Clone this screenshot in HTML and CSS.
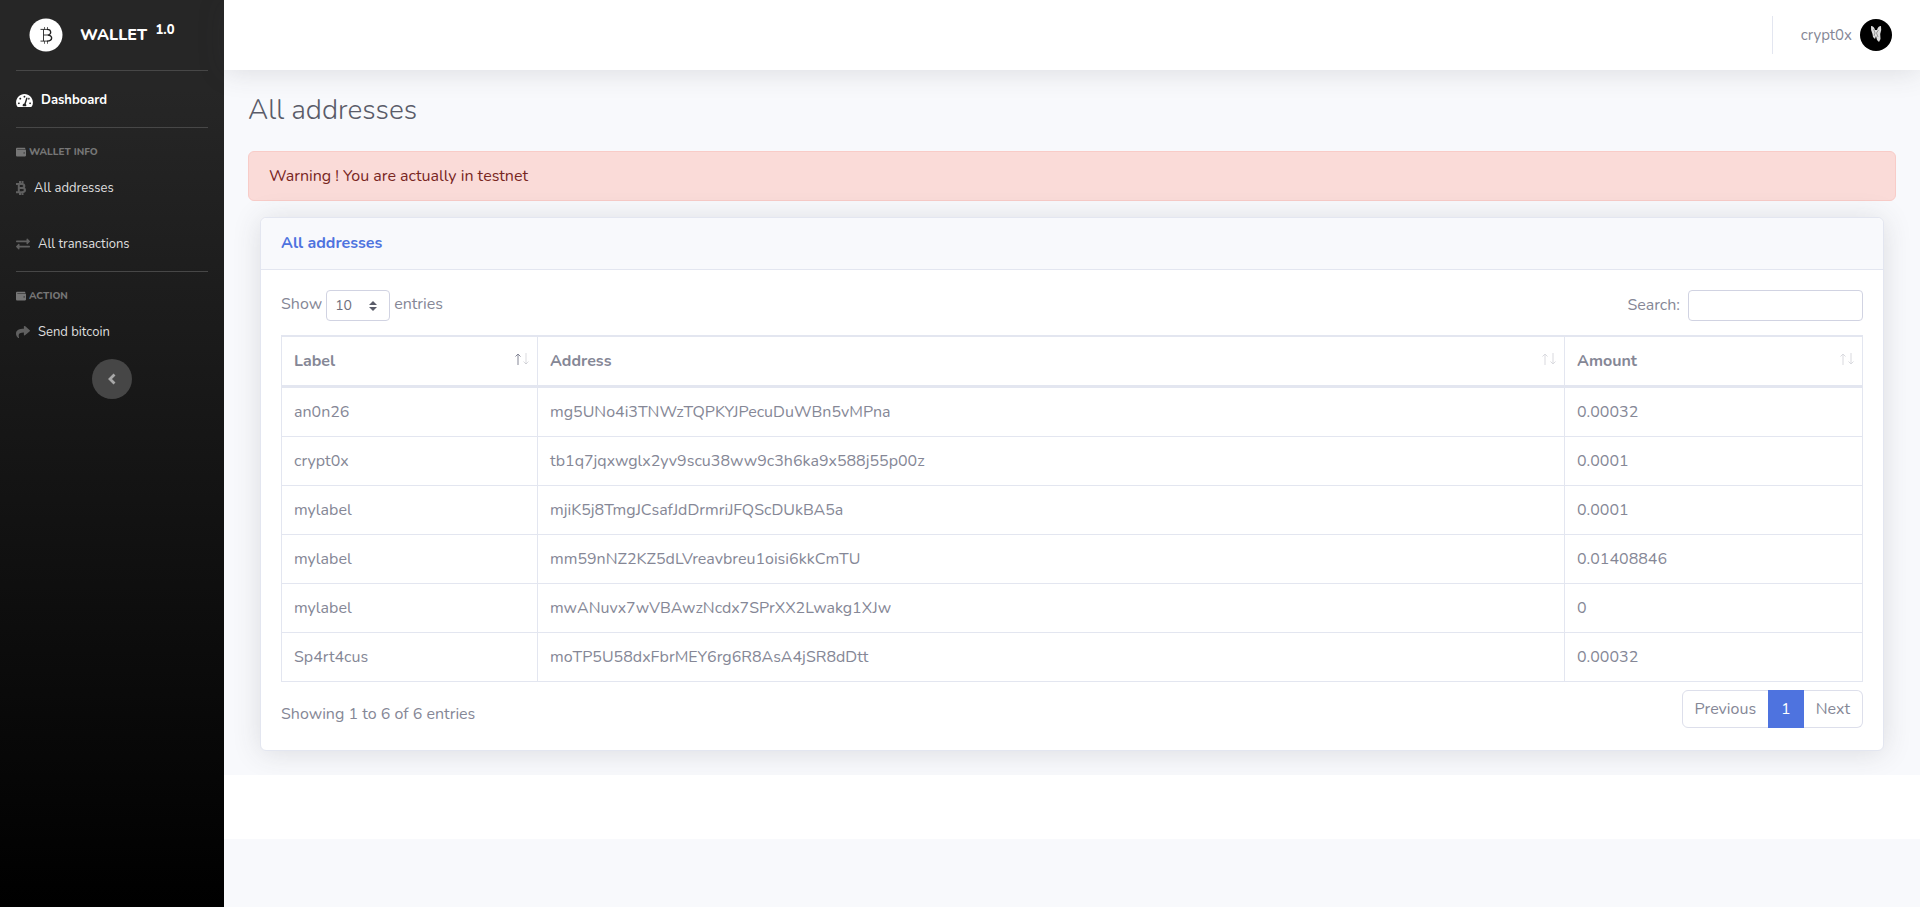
FILE: index.html
```html
<!DOCTYPE html>
<html lang="en">
<head>
<meta charset="utf-8">
<title>Wallet - All addresses</title>
<link rel="stylesheet" href="styles.css">
</head>
<body>
<svg class="sprite" aria-hidden="true">
  <symbol id="wallet" viewBox="0 0 512 512"><path fill-rule="evenodd" d="M461 128H80c-9 0-16-7-16-16s7-16 16-16h384c9 0 16-7 16-16 0-27-21-48-48-48H64C29 32 0 61 0 96v320c0 35 29 64 64 64h397c28 0 51-22 51-48V176c0-26-23-48-51-48zm-45 208c-18 0-32-14-32-32s14-32 32-32 32 14 32 32-14 32-32 32z"/></symbol>
  <symbol id="sort" viewBox="0 0 14 12"><path class="up" d="M3 12V1M.5 3.500 3 1l2.500 2.500" fill="none" stroke="currentColor"/><path class="down" d="M11 0v11M8.500 8.500 11 11l2.500-2.500" fill="none" stroke="currentColor"/></symbol>
</svg>
<div class="layout">
  <nav class="sidebar">
    <a class="brand" href="#">
      <svg class="brand-logo" viewBox="0 0 34 34" aria-hidden="true">
        <circle cx="17" cy="17" r="16.500" fill="#fff"/>
        <g fill="none" stroke="#222"><path stroke-width=".9" d="M11.500 11.400h7M11.500 23.100h7M14.500 17h4M14.500 11.400v11.700"/><path stroke-width=".7" d="M15.500 9v2.400M18.500 9v2.400M15.500 23.100v2.700M18.500 23.100v2.700"/><path stroke-width="1.400" d="M18 11.400c4.800 0 4.800 5.600.5 5.600 5.600 0 5.600 6.100-.5 6.100"/></g>
      </svg>
      <span class="brand-text">WALLET <sup>1.0</sup></span>
    </a>
    <hr class="divider">
    <a class="nav-link active" href="#">
      <svg width="17" height="15" viewBox="0 0 576 512" aria-hidden="true"><path fill-rule="evenodd" d="M288 32C129 32 0 161 0 320c0 53 14 102 39 145 6 9 16 15 27 15h444c11 0 21-6 27-15 25-43 39-92 39-145C576 161 447 32 288 32zm0 64c15 0 27 10 31 24l-9 28c-6 4-13 12-22 12-18 0-32-14-32-32s14-32 32-32zM96 384c-18 0-32-14-32-32s14-32 32-32 32 14 32 32-14 32-32 32zm48-160c-18 0-32-14-32-32s14-32 32-32 32 14 32 32-14 32-32 32zm247-33l-61 184c13 11 22 27 22 45 0 12-3 22-9 32H233c-6-10-9-20-9-32 0-34 27-61 60-64l61-184c4-13 18-20 31-16 12 5 19 18 15 35zm15 26 20-57c2 0 4 0 6 0 18 0 32 14 32 32s-14 32-32 32c-10 0-19-4-26-7zm74 167c-18 0-32-14-32-32s14-32 32-32 32 14 32 32-14 32-32 32z"/></svg>
      <span>Dashboard</span>
    </a>
    <hr class="divider spaced">
    <div class="side-heading"><svg width="10" height="10"><use href="#wallet"/></svg>Wallet info</div>
    <a class="nav-link" href="#">
      <svg width="10" height="14" viewBox="0 0 10 14" aria-hidden="true"><path d="M0 2.900h5.500c3.800 0 3.800 4 0 4M3 6.900h3c4 0 4 4.300 0 4.300H0M2.800 2v10M4 0v2.500M6.500 0v2.500M4 11.500V14M6.500 11.500V14" fill="none" stroke="#606060" stroke-width="2"/></svg>
      <span>All addresses</span>
    </a>
    <a class="nav-link" href="#">
      <svg width="14" height="14" viewBox="0 0 512 512" aria-hidden="true"><path d="M0 168v-16c0-13 11-24 24-24h360V80c0-21 26-32 41-17l80 80c9 9 9 25 0 34l-80 80c-15 15-41 4-41-17v-48H24c-13 0-24-11-24-24zm488 152H128v-48c0-21-26-32-41-17L7 335c-9 9-9 25 0 34l80 80c15 15 41 4 41-17v-48h360c13 0 24-11 24-24v-16c0-13-11-24-24-24z"/></svg>
      <span>All transactions</span>
    </a>
    <hr class="divider spaced">
    <div class="side-heading"><svg width="10" height="10"><use href="#wallet"/></svg>Action</div>
    <a class="nav-link" href="#">
      <svg width="14" height="14" viewBox="0 0 512 512" aria-hidden="true"><path d="M504 190 328 38C312 25 288 35 288 56v80C127 138 0 170 0 322c0 62 40 122 83 154 14 10 33-2 28-18C66 313 133 274 288 272v88c0 21 24 32 40 18l176-152c11-9 11-26 0-36z"/></svg>
      <span>Send bitcoin</span>
    </a>
    <button class="toggle" type="button" aria-label="Collapse sidebar">
      <svg width="8" height="12" viewBox="0 0 8 12" aria-hidden="true"><path d="M6.500 1.500 2 6l4.500 4.500" fill="none" stroke="currentColor" stroke-width="2.800"/></svg>
    </button>
  </nav>

  <div class="content">
    <header class="topbar">
      <a class="user" href="#">
        <span>crypt0x</span>
        <svg width="32" height="32" viewBox="0 0 32 32" aria-hidden="true"><circle cx="16" cy="16" r="16"/><path d="M11 7q3 0 4 4h2q1-4 4-4 .8 4-.8 8l.3 5-1.500 3-2-2-1-4-1 3-2-2-.5-3q-2-4-1.500-8z" fill="#ddd"/><path d="M13.500 10l1.500 4-1 3M18.500 11l-2 3 1.500 4" stroke="#888" fill="none" stroke-width=".8"/></svg>
      </a>
    </header>

    <main class="page">
      <h1>All addresses</h1>
      <div class="alert" role="alert">Warning ! You are actually in testnet</div>
      <section class="card">
        <h2 class="card-header">All addresses</h2>
        <div class="card-body">
          <div class="controls">
            <label class="length">Show
              <select><option>10</option><option>25</option><option>50</option><option>100</option></select>
              entries</label>
            <label class="search">Search:<input type="search"></label>
          </div>
          <table>
            <colgroup><col class="c-label"><col class="c-address"><col class="c-amount"></colgroup>
            <thead>
              <tr>
                <th scope="col" aria-sort="ascending"><div class="th">Label<svg class="sort" viewBox="0 0 14 12" aria-hidden="true"><path d="M3 12V1M.5 3.500 3 1l2.500 2.500"/><path class="faint" d="M11 0v11M8.500 8.500 11 11l2.500-2.500"/></svg></div></th>
                <th scope="col"><div class="th">Address<svg class="sort faint" viewBox="0 0 14 12" aria-hidden="true"><use href="#sort"/></svg></div></th>
                <th scope="col"><div class="th">Amount<svg class="sort faint" viewBox="0 0 14 12" aria-hidden="true"><use href="#sort"/></svg></div></th>
              </tr>
            </thead>
            <tbody>
              <tr><td>an0n26</td><td>mg5UNo4i3TNWzTQPKYJPecuDuWBn5vMPna</td><td>0.00032</td></tr>
              <tr><td>crypt0x</td><td>tb1q7jqxwglx2yv9scu38ww9c3h6ka9x588j55p00z</td><td>0.0001</td></tr>
              <tr><td>mylabel</td><td>mjiK5j8TmgJCsafJdDrmriJFQScDUkBA5a</td><td>0.0001</td></tr>
              <tr><td>mylabel</td><td>mm59nNZ2KZ5dLVreavbreu1oisi6kkCmTU</td><td>0.01408846</td></tr>
              <tr><td>mylabel</td><td>mwANuvx7wVBAwzNcdx7SPrXX2Lwakg1XJw</td><td>0</td></tr>
              <tr><td>Sp4rt4cus</td><td>moTP5U58dxFbrMEY6rg6R8AsA4jSR8dDtt</td><td>0.00032</td></tr>
            </tbody>
          </table>
          <div class="table-footer">
            <div class="info">Showing 1 to 6 of 6 entries</div>
            <nav class="pagination" aria-label="Table pages">
              <a href="#">Previous</a><a class="current" href="#">1</a><a href="#">Next</a>
            </nav>
          </div>
        </div>
      </section>
    </main>
    <footer class="footer"></footer>
  </div>
</div>
</body>
</html>
```
FILE: styles.css
```css
* { box-sizing: border-box; }
body {
  margin: 0;
  background: #f8f9fc;
  color: #858796;
  font: 16px/24px Nunito, Lato, "Open Sans", sans-serif;
}
a { color: inherit; text-decoration: none; }
.sprite { display: none; }
.layout { display: flex; min-height: 100vh; }

.sidebar {
  flex: 0 0 224px;
  display: flex;
  flex-direction: column;
  background: linear-gradient(180deg, #262626 10%, #000 100%);
}
.brand {
  display: flex;
  align-items: center;
  gap: 17px;
  height: 70px;
  padding-left: 29px;
  color: #fff;
  font-weight: 800;
}
.brand-logo { width: 34px; height: 34px; }
.brand-text sup { font-size: 13px; line-height: 0; margin-left: 4px; }
.divider {
  width: calc(100% - 32px);
  margin: 0 16px;
  border: 0;
  border-top: 1px solid #474747;
}
.divider.spaced { margin-bottom: 16px; }
.nav-link {
  display: flex;
  align-items: center;
  gap: 8px;
  padding: 17px 16px 15px;
  color: #dfdfdf;
  font-size: 13px;
}
.nav-link svg { fill: #606060; }
.nav-link.active { color: #fff; font-weight: 700; }
.nav-link.active svg { fill: #fff; }
.side-heading {
  display: flex;
  align-items: center;
  gap: 3px;
  padding: 1px 16px 0;
  color: #767676;
  font-size: 10px;
  line-height: 14px;
  font-weight: 800;
  text-transform: uppercase;
}
.side-heading svg { fill: #767676; }
.toggle {
  display: flex;
  align-items: center;
  justify-content: center;
  align-self: center;
  width: 40px;
  height: 40px;
  padding: 0;
  border: 0;
  border-radius: 50%;
  background: #464646;
  color: #a8a8a8;
}

.content { flex: 1; min-width: 0; }
.topbar {
  display: flex;
  align-items: center;
  justify-content: flex-end;
  height: 70px;
  padding-right: 28px;
  background: #fff;
  box-shadow: 0 2px 28px rgba(58, 59, 69, .15);
}
.user {
  display: flex;
  align-items: center;
  gap: 8px;
  height: 38px;
  padding-left: 28px;
  border-left: 1px solid #e3e6f0;
  font-size: 15px;
}
.page { padding: 24px; overflow: hidden; }
h1 {
  margin: 0 0 24px;
  color: #5a5c69;
  font-size: 28px;
  line-height: 33px;
  font-weight: 300;
}
.alert {
  margin-bottom: 16px;
  padding: 12px 20px;
  border: 1px solid #f8ccc8;
  border-radius: 6px;
  background: #fadbd8;
  color: #78261f;
}
.card {
  margin: 0 12px;
  border: 1px solid #e3e6f0;
  border-radius: 6px;
  background: #fff;
  box-shadow: 0 2px 28px rgba(58, 59, 69, .15);
}
.card-header {
  margin: 0;
  padding: 16px 20px;
  border-bottom: 1px solid #e3e6f0;
  border-radius: 6px 6px 0 0;
  background: #f8f9fc;
  color: #4e73df;
  font-size: 16px;
  line-height: 19px;
  font-weight: 700;
}
.card-body { padding: 20px; }
.controls { display: flex; justify-content: space-between; margin-bottom: 14px; }
.length, .search { display: flex; align-items: flex-start; }
.length { gap: 4px; line-height: 28px; }
.search { gap: 8px; line-height: 30px; }
.length select, .search input {
  height: 31px;
  padding: 0 8px;
  border: 1px solid #d1d3e2;
  border-radius: 4px;
  background: #fff;
  color: #6e707e;
  font: inherit;
  font-size: 14px;
}
.length select {
  width: 64px;
  appearance: none;
  background: #fff url("data:image/svg+xml,%3Csvg xmlns='http://www.w3.org/2000/svg' viewBox='0 0 4 5'%3E%3Cpath fill='%235a5c69' d='M2 0L0 2h4zm0 5L0 3h4z'/%3E%3C/svg%3E") no-repeat right 12px center / 8px 10px;
}
.search input { width: 175px; }

table {
  width: 100%;
  table-layout: fixed;
  border-collapse: separate;
  border-spacing: 0;
  border: 1px solid #e3e6f0;
}
.c-label { width: 255px; }
.c-amount { width: 298px; }
th, td { padding: 12px; border: 0 solid #e3e6f0; text-align: left; }
th { border-top-width: 1px; border-bottom-width: 3px; }
td { border-bottom-width: 1px; }
tbody tr:last-child td { border-bottom-width: 0; }
th + th, td + td { border-left-width: 1px; }
.th { display: flex; justify-content: space-between; margin-right: -4px; }
.sort { width: 14px; height: 12px; margin-top: 4px; fill: none; stroke: currentColor; }
.faint { opacity: .3; }

.table-footer { display: flex; justify-content: space-between; padding: 8px 0 2px; }
.info { padding-top: 12px; }
.pagination { display: flex; }
.pagination a {
  padding: 6px 12px;
  border: 1px solid #dddfeb;
}
.pagination a + a { margin-left: -1px; }
.pagination a:first-child { border-radius: 6px 0 0 6px; }
.pagination a:last-child { border-left: 0; margin-left: 0; border-radius: 0 6px 6px 0; }
.pagination .current { border-color: #4e73df; background: #4e73df; color: #fff; }
.footer { height: 64px; background: #fff; }
```
